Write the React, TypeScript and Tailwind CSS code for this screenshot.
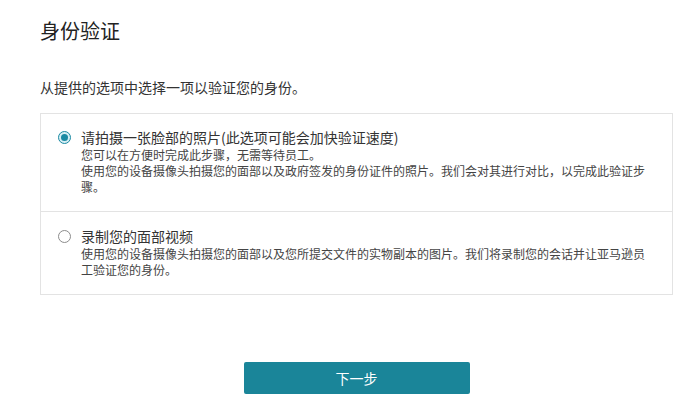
import { useState } from 'react';

const options = [
  {
    id: 'photo',
    title: '请拍摄一张脸部的照片(此选项可能会加快验证速度)',
    lines: [
      '您可以在方便时完成此步骤，无需等待员工。',
      '使用您的设备摄像头拍摄您的面部以及政府签发的身份证件的照片。我们会对其进行对比，以完成此验证步骤。',
    ],
  },
  {
    id: 'video',
    title: '录制您的面部视频',
    lines: [
      '使用您的设备摄像头拍摄您的面部以及您所提交文件的实物副本的图片。我们将录制您的会话并让亚马逊员工验证您的身份。',
    ],
  },
];

function Radio({ checked }: { checked: boolean }) {
  return checked ? (
    <span className="mt-[4px] flex h-[13px] w-[13px] shrink-0 items-center justify-center rounded-full border border-[#1b8aa3] bg-[#d6eef4]">
      <span className="h-[7px] w-[7px] rounded-full bg-[#1b8aa3]" />
    </span>
  ) : (
    <span className="mt-[4px] h-[13px] w-[13px] shrink-0 rounded-full border border-[#8c8c8c] bg-white" />
  );
}

export default function App() {
  const [selected, setSelected] = useState('photo');

  return (
    <div
      className="min-h-[407px] w-[698px] bg-white pl-10 pt-[17px] text-[#333]"
      style={{ fontFamily: '"Noto Sans CJK SC", "Noto Sans", sans-serif' }}
    >
      <h1 className="text-[20px] leading-[28px] font-normal text-[#222]">身份验证</h1>
      <p className="mt-[32px] text-[14px] leading-[20px] text-[#333]">从提供的选项中选择一项以验证您的身份。</p>

      <div className="mt-[16px] w-[633px] border border-[#e3e3e3]">
        {options.map((opt, i) => (
          <div
            key={opt.id}
            onClick={() => setSelected(opt.id)}
            className={`flex cursor-pointer gap-[10px] pl-[17px] pr-6 ${
              i === 0 ? 'border-b border-[#e3e3e3] pt-[13px] pb-[16px]' : 'pt-[14px] pb-[16px]'
            }`}
          >
            <Radio checked={selected === opt.id} />
            <div className="flex-1">
              <div className="text-[14px] leading-[20px] text-[#333]">{opt.title}</div>
              {opt.lines.map((line) => (
                <div key={line} className="text-[12px] leading-[16px] text-[#444]">
                  {line}
                </div>
              ))}
            </div>
          </div>
        ))}
      </div>

      <div className="mt-[67px] flex w-[633px] justify-center">
        <button className="h-[32px] w-[226px] rounded-[2px] bg-[#1a8599] text-[14px] text-white">
          下一步
        </button>
      </div>
    </div>
  );
}
